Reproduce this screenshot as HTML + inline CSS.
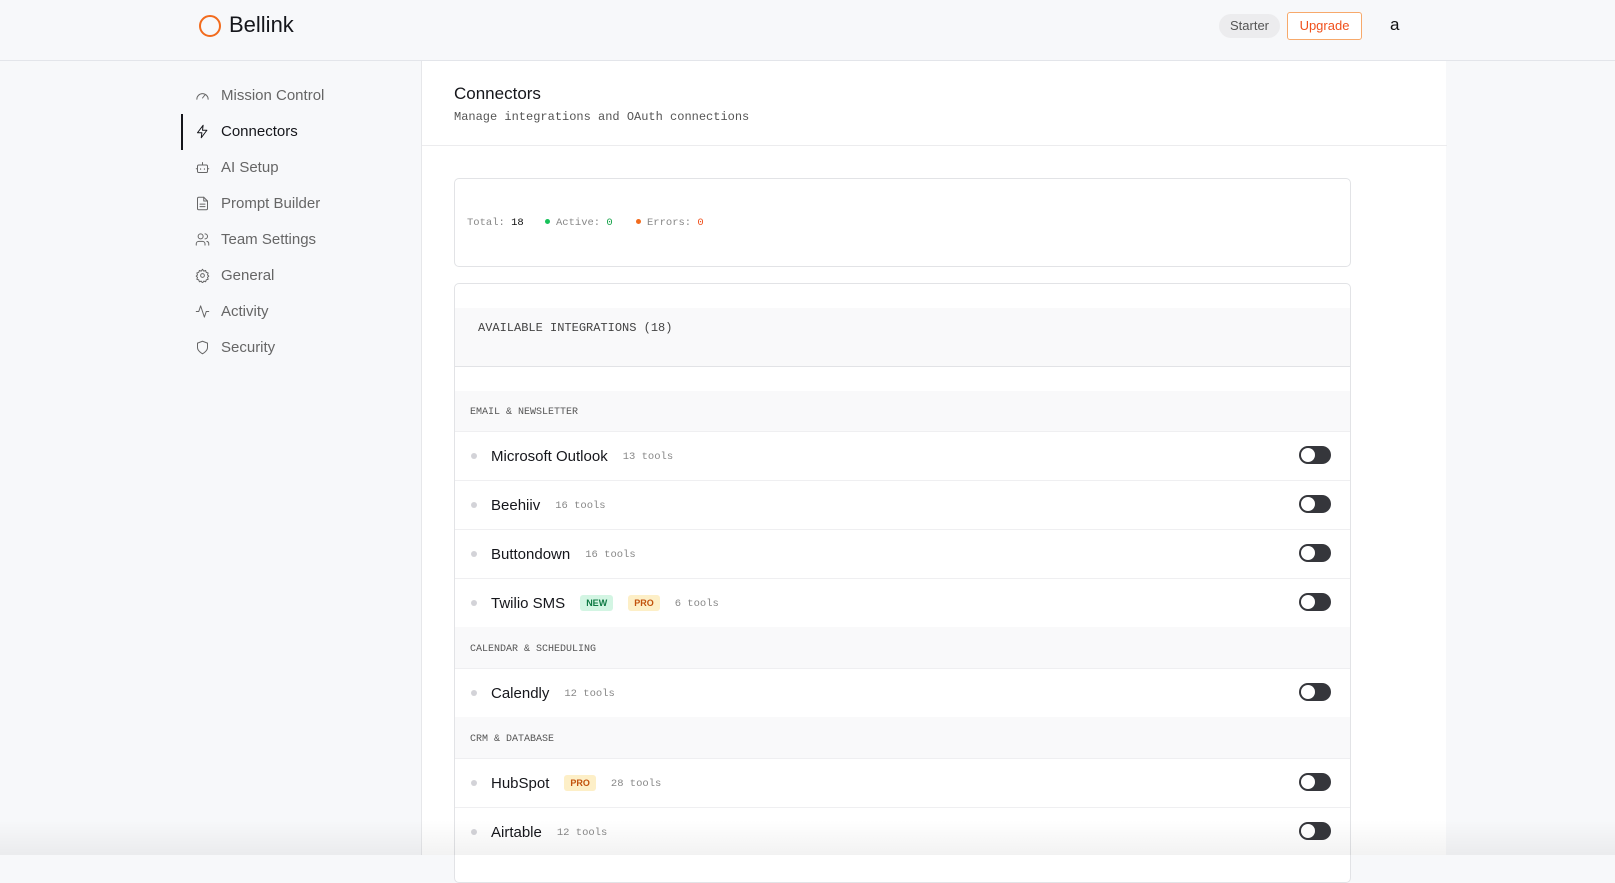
<!DOCTYPE html>
<html><head><meta charset="utf-8"><style>
*{box-sizing:border-box;margin:0;padding:0}
body{width:1615px;height:855px;overflow:hidden;background:#f7f8fa;font-family:"Liberation Sans",sans-serif;color:#1a1b20;position:relative}
.mono{font-family:"Liberation Mono",monospace}
.hdr{position:absolute;left:0;top:0;width:1615px;height:61px;border-bottom:1px solid #e3e5ea;background:#f7f8fa}
.logo{position:absolute;left:199px;top:15px;width:22px;height:22px;border:2.5px solid #f26b1d;border-radius:50%}
.brand{position:absolute;left:229px;top:12px;font-size:22px;font-weight:500;color:#15161b}
.starter{position:absolute;left:1219px;top:14px;width:61px;height:24px;border-radius:12px;background:#ececee;font-size:13px;color:#555;text-align:center;line-height:24px}
.upg{position:absolute;left:1287px;top:12px;width:75px;height:28px;border:1px solid #f7a96b;border-radius:3px;background:#fff;font-size:13px;color:#f0501c;text-align:center;line-height:26px}
.av{position:absolute;left:1390px;top:15px;font-size:17px;color:#111}
.nav{position:absolute;left:195px;font-size:15px;color:#666;display:flex;align-items:center}
.nav svg{width:15px;height:15px;margin-right:11px;stroke:#666;fill:none;stroke-width:1.6;stroke-linecap:round;stroke-linejoin:round}
.nav.act{color:#15161b}.nav.act svg{stroke:#15161b}
.bar{position:absolute;left:181px;top:114px;width:2px;height:36px;background:#15161b}
.main{position:absolute;left:421px;top:61px;width:1025px;height:794px;background:#fff;border-left:1px solid #e6e7ea}
.title{position:absolute;left:32px;top:23px;font-size:17px;color:#15161b}
.sub{position:absolute;left:32px;top:49px;font-size:12px;color:#555}
.hline{position:absolute;left:0;top:84px;width:1025px;height:1px;background:#ececee}
.card{position:absolute;left:32px;width:897px;border:1px solid #e2e3e6;border-radius:5px;background:#fff}
.stats{top:117px;height:89px;font-size:10.5px;color:#888}
.stats span{position:absolute;top:38px}
.dot{display:inline-block;width:5px;height:5px;border-radius:50%;margin-right:6px;vertical-align:1px}
.ints{top:222px;height:600px;overflow:hidden}
.band{position:absolute;left:0;width:895px;background:#f9f9fa}
.cat{font-size:10px;color:#555;padding-left:15px}
.row{position:absolute;left:0;width:895px;height:49px;border-top:1px solid #efeff1;background:#fff;display:flex;align-items:center}
.row .b{width:6px;height:6px;border-radius:50%;background:#d3d3d8;margin-left:16px;margin-right:14px}
.row .n{font-size:15px;color:#15161b;margin-right:15px}
.row .t{font-size:10.5px;color:#888;padding-top:2px}
.bd{font-size:9px;font-weight:bold;padding:3px 6px;border-radius:3px;margin-right:15px}
.new{background:#d3f5e3;color:#0f7a44}.pro{background:#fdefc7;color:#c2520c}
.tg{position:absolute;right:19px;top:14px;width:32px;height:18px;border-radius:9px;background:#35363b}
.tg:after{content:"";position:absolute;left:2px;top:2px;width:14px;height:14px;border-radius:50%;background:#fff}
.shade{position:absolute;left:0;top:820px;width:1615px;height:35px;background:linear-gradient(rgba(0,0,0,0),rgba(0,0,0,0.05))}
</style></head><body>
<div class="hdr"><div class="logo"></div><div class="brand">Bellink</div>
<div class="starter">Starter</div><div class="upg">Upgrade</div><div class="av">a</div></div>

<div class="bar"></div>
<div class="nav" style="top:87px"><svg viewBox="0 0 24 24"><path d="M3 18a9 9 0 1 1 18 0"/><path d="M12 16l4-5"/></svg>Mission Control</div>
<div class="nav act" style="top:123px"><svg viewBox="0 0 24 24"><path d="M13 2L4 14h7l-1 8 9-12h-7z"/></svg>Connectors</div>
<div class="nav" style="top:159px"><svg viewBox="0 0 24 24"><rect x="4" y="8" width="16" height="12" rx="2"/><path d="M12 8V4M9 14v1M15 14v1M2 14h2M20 14h2"/></svg>AI Setup</div>
<div class="nav" style="top:195px"><svg viewBox="0 0 24 24"><path d="M14 2H6a2 2 0 0 0-2 2v16a2 2 0 0 0 2 2h12a2 2 0 0 0 2-2V8z"/><path d="M14 2v6h6M8 13h8M8 17h8"/></svg>Prompt Builder</div>
<div class="nav" style="top:231px"><svg viewBox="0 0 24 24"><circle cx="9" cy="7" r="4"/><path d="M2 21v-2a4 4 0 0 1 4-4h6a4 4 0 0 1 4 4v2M16 3a4 4 0 0 1 0 8M22 21v-2a4 4 0 0 0-3-4"/></svg>Team Settings</div>
<div class="nav" style="top:267px"><svg viewBox="0 0 24 24"><circle cx="12" cy="12" r="3"/><path d="M12 2l2 3 3-1 1 3 3 1-1 3 2 2-2 2 1 3-3 1-1 3-3-1-2 3-2-3-3 1-1-3-3-1 1-3-2-2 2-2-1-3 3-1 1-3 3 1z"/></svg>General</div>
<div class="nav" style="top:303px"><svg viewBox="0 0 24 24"><path d="M22 12h-4l-3 9L9 3l-3 9H2"/></svg>Activity</div>
<div class="nav" style="top:339px"><svg viewBox="0 0 24 24"><path d="M12 22s8-4 8-10V5l-8-3-8 3v7c0 6 8 10 8 10z"/></svg>Security</div>

<div class="main">
<div class="title">Connectors</div>
<div class="sub mono">Manage integrations and OAuth connections</div>
<div class="hline"></div>
<div class="card stats mono">
<span style="left:12px">Total: <b style="color:#111;font-weight:normal">18</b></span>
<span style="left:90px"><i class="dot" style="background:#17c25a"></i>Active: <b style="color:#17a34a;font-weight:normal">0</b></span>
<span style="left:181px"><i class="dot" style="background:#f26b1d"></i>Errors: <b style="color:#f0501c;font-weight:normal">0</b></span>
</div>
<div class="card ints">
<div class="band mono" style="top:24px;height:59px;border-bottom:1px solid #e2e3e6;font-size:12px;color:#444;padding:12px 0 0 23px;line-height:16px">AVAILABLE INTEGRATIONS (18)</div>
<div class="band cat mono" style="top:107px;height:40px;line-height:44px">EMAIL &amp; NEWSLETTER</div>
<div class="row" style="top:147px"><i class="b"></i><span class="n">Microsoft Outlook</span><span class="t mono">13 tools</span><i class="tg"></i></div>
<div class="row" style="top:196px"><i class="b"></i><span class="n">Beehiiv</span><span class="t mono">16 tools</span><i class="tg"></i></div>
<div class="row" style="top:245px"><i class="b"></i><span class="n">Buttondown</span><span class="t mono">16 tools</span><i class="tg"></i></div>
<div class="row" style="top:294px"><i class="b"></i><span class="n">Twilio SMS</span><span class="bd new">NEW</span><span class="bd pro">PRO</span><span class="t mono">6 tools</span><i class="tg"></i></div>
<div class="band cat mono" style="top:343px;height:41px;line-height:45px">CALENDAR &amp; SCHEDULING</div>
<div class="row" style="top:384px"><i class="b"></i><span class="n">Calendly</span><span class="t mono">12 tools</span><i class="tg"></i></div>
<div class="band cat mono" style="top:433px;height:41px;line-height:45px">CRM &amp; DATABASE</div>
<div class="row" style="top:474px"><i class="b"></i><span class="n">HubSpot</span><span class="bd pro">PRO</span><span class="t mono">28 tools</span><i class="tg"></i></div>
<div class="row" style="top:523px"><i class="b"></i><span class="n">Airtable</span><span class="t mono">12 tools</span><i class="tg"></i></div>
</div>
</div>
<div class="shade"></div>
</body></html>
